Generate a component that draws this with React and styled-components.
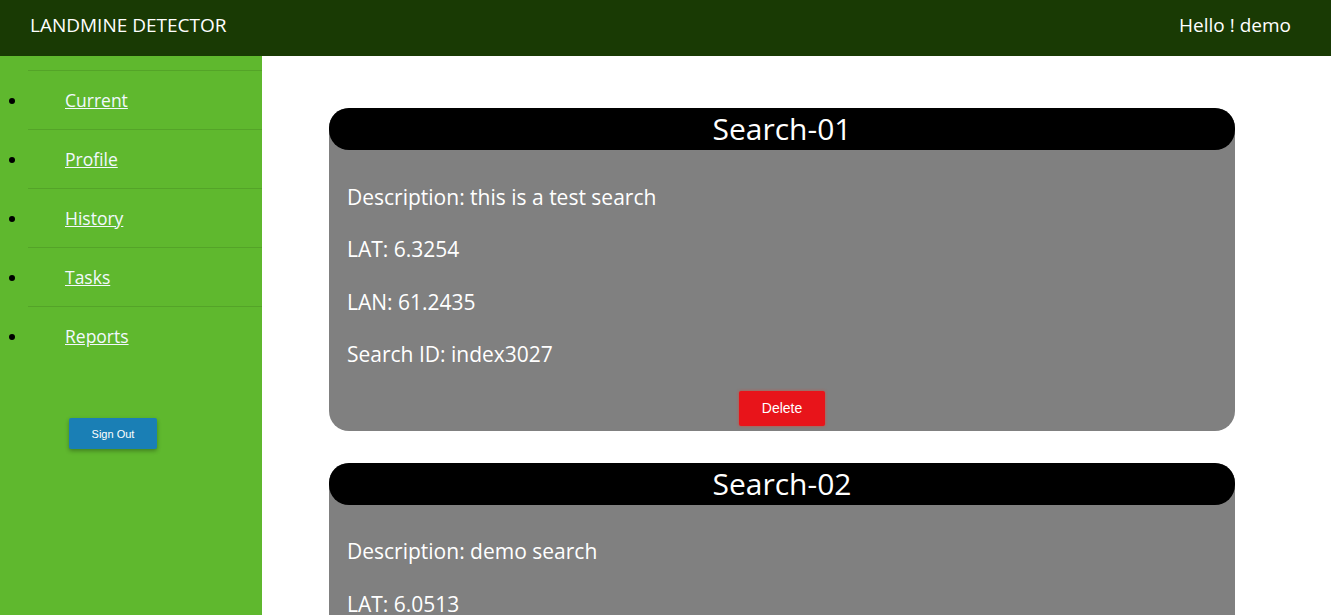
import React from 'react';
import styled, { createGlobalStyle } from 'styled-components';

const GlobalStyle = createGlobalStyle`
  html, body {
    margin: 0;
    padding: 0;
    background: #ffffff;
    font-family: "Open Sans", "Noto Sans", sans-serif;
  }
`;

const Page = styled.div`
  height: 615px;
  overflow: hidden;
  display: flex;
  flex-direction: column;
`;

const Header = styled.header`
  height: 56px;
  box-sizing: border-box;
  flex-shrink: 0;
  background-color: #193a04;
  color: #ffffff;
  display: flex;
  align-items: center;
  justify-content: space-between;
  padding: 0 40px 6px 30px;
  font-size: 19px;
`;

const Body = styled.div`
  flex: 1;
  display: flex;
  min-height: 0;
`;

const Sidebar = styled.nav`
  width: 262px;
  flex-shrink: 0;
  background-color: #5fb82e;
  padding-top: 14px;
`;

const NavList = styled.ul`
  list-style: disc;
  margin: 0;
  padding: 0 0 0 28px;
  color: #000000;
`;

const NavItem = styled.li`
  height: 58px;
  border-top: 1px solid #54a428;
  padding-left: 37px;
  font-size: 17.5px;
  line-height: 58px;
`;

const NavLink = styled.a`
  color: #f2f8ff;
  text-decoration: underline;
  cursor: pointer;
`;

const SignOutRow = styled.div`
  padding: 53px 0 0 69px;
`;

const SignOut = styled.button`
  width: 88px;
  height: 31px;
  border: none;
  border-radius: 2px;
  background-color: #1a7fb5;
  color: #ffffff;
  font-family: "Liberation Sans", Arial, sans-serif;
  font-size: 11px;
  box-shadow: 0 2px 4px rgba(0, 0, 0, 0.3);
`;

const Main = styled.main`
  flex: 1;
  padding: 52px 96px 0 67px;
  display: flex;
  flex-direction: column;
  gap: 32px;
`;

const Card = styled.section`
  background-color: #808080;
  border-radius: 20px;
  color: #ffffff;
  padding-bottom: 5px;
  flex-shrink: 0;
`;

const CardTitle = styled.h2`
  margin: 0;
  height: 42px;
  line-height: 42px;
  background-color: #000000;
  border-radius: 20px;
  text-align: center;
  font-size: 30px;
  font-weight: 400;
`;

const CardBody = styled.div`
  padding: 9px 18px 0;
`;

const Field = styled.p`
  margin: 22.5px 0;
  font-size: 21px;
  line-height: 30px;
  &:last-child {
    margin-bottom: 21.5px;
  }
`;

const Actions = styled.div`
  display: flex;
  justify-content: center;
`;

const DeleteButton = styled.button`
  width: 86px;
  height: 35px;
  border: none;
  border-radius: 2px;
  background-color: #e8141a;
  color: #ffffff;
  font-family: "Liberation Sans", Arial, sans-serif;
  font-size: 14px;
  box-shadow: 0 0 3px rgba(232, 60, 40, 0.8);
`;

const links = ['Current', 'Profile', 'History', 'Tasks', 'Reports'];

const searches = [
  { title: 'Search-01', desc: 'this is a test search', lat: '6.3254', lan: '61.2435', id: 'index3027' },
  { title: 'Search-02', desc: 'demo search', lat: '6.0513', lan: '60.1234', id: 'index3028' },
];

function App() {
  return (
    <Page>
      <GlobalStyle />
      <Header>
        <span>LANDMINE DETECTOR</span>
        <span>Hello ! demo</span>
      </Header>
      <Body>
        <Sidebar>
          <NavList>
            {links.map((l) => (
              <NavItem key={l}>
                <NavLink>{l}</NavLink>
              </NavItem>
            ))}
          </NavList>
          <SignOutRow>
            <SignOut>Sign Out</SignOut>
          </SignOutRow>
        </Sidebar>
        <Main>
          {searches.map((s) => (
            <Card key={s.title}>
              <CardTitle>{s.title}</CardTitle>
              <CardBody>
                <Field>Description: {s.desc}</Field>
                <Field>LAT: {s.lat}</Field>
                <Field>LAN: {s.lan}</Field>
                <Field>Search ID: {s.id}</Field>
              </CardBody>
              <Actions>
                <DeleteButton>Delete</DeleteButton>
              </Actions>
            </Card>
          ))}
        </Main>
      </Body>
    </Page>
  );
}

export default App;
